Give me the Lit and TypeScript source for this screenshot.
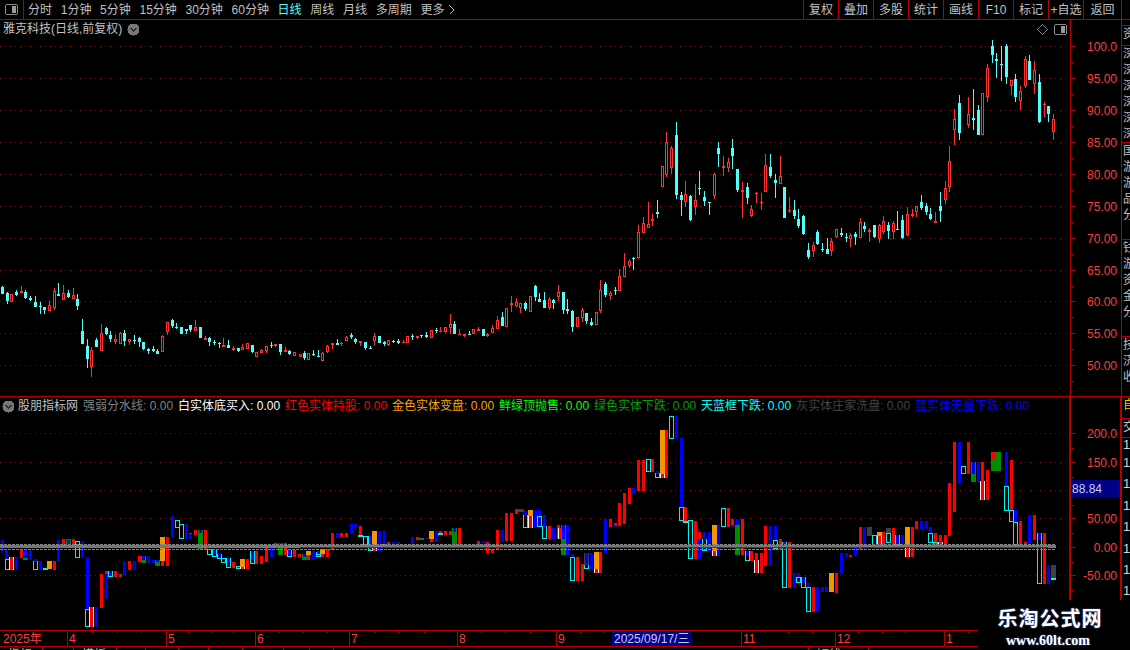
import { LitElement, html, css, svg } from "lit";
import { customElement } from "lit/decorators.js";

type Candle = [number, number, number, number, number, string];

function parseCandles(src: string, x0: number, y0: number): Candle[] {
  return src.trim().split(/\s*;\s*/).filter(Boolean).map((row) => {
    const p = row.trim().split(/\s+/);
    return [
      x0 + Number(p[0]) / 3,
      Math.round(y0 + Number(p[1]) / 3),
      Math.round(y0 + Number(p[2]) / 3),
      Math.round(y0 + Number(p[3]) / 3),
      Math.round(y0 + Number(p[4]) / 3),
      p[5],
    ] as Candle;
  });
}

const CANDLES: Candle[] = [
  ...parseCandles(`7 48 50 72 72 c;22 66 68 93 102 c;34 72 72 95 95 r;49 60 66 76 78 c;64 48 63 69 69 r;76 60 66 85 87 c;91 78 84 90 94 c;106 78 96 111 111 c;121 96 108 111 132 c;133 111 111 120 132 c;148 93 105 123 123 r;163 54 63 114 120 r;175 39 72 78 78 c;190 45 69 90 90 r;205 60 69 82 84 c;220 54 75 87 87 r;232 72 87 108 120 c;247 147 183 222 222 c;262 207 228 267 294 c;274 231 240 291 321 r;289 205 210 231 231 c;304 162 189 243 243 r;319 171 174 192 195 c;331 183 195 207 216 c;346 195 207 216 222 r;361 186 189 222 222 r;373 180 189 213 228 c;388 207 207 216 225 r;403 195 209 212 222 c;418 201 204 216 231 c;430 216 216 237 240 c;445 234 237 243 252 c;460 228 236 243 246 c;472 237 242 252 252 c;487 195 198 246 246 r;502 156 156 186 195 r;517 147 150 168 174 c;529 159 172 174 177 c;544 171 171 192 192 c;559 177 178 183 192 c;571 165 165 180 186 c;586 150 171 183 183 r;601 171 171 204 204 c;616 198 204 210 210 r;628 201 204 216 228 c;643 210 216 219 225 c;658 216 218 219 234 c;670 204 225 231 231 r;685 210 225 234 234 c;700 228 234 240 243 r;715 234 235 243 246 c;727 222 231 240 240 r;742 219 219 237 237 r;757 225 225 246 249 c;769 246 246 261 261 r;784 237 240 249 249 r;799 228 228 243 249 r;814 216 225 228 234 c;826 222 222 228 231 r;841 222 222 246 255 c;856 231 240 246 246 r;868 240 243 252 255 c;883 246 246 258 258 r`, 0, 270),
  ...parseCandles(`0 252 252 262 262 r;13 243 249 264 270 c;25 249 249 270 270 r;40 240 252 255 258 c;55 240 258 261 261 c;67 246 249 273 273 r;82 225 228 246 249 r;97 219 219 225 237 r;112 207 219 225 225 c;124 216 219 219 228 r;139 198 201 213 213 r;154 189 195 201 207 c;166 204 207 216 222 c;181 213 213 219 228 r;196 216 216 234 240 c;211 228 234 237 237 c;223 189 198 213 225 r;238 198 198 219 219 c;253 213 216 222 228 c;265 210 210 226 228 r;280 210 213 216 219 c;295 207 213 219 222 c;310 210 216 219 219 r;322 198 198 219 219 r;337 192 197 198 210 c;352 198 198 204 207 r;364 195 195 198 204 c;379 186 195 201 204 c;394 180 180 204 204 r;409 174 180 183 189 c;421 171 183 183 183 r;436 171 171 186 189 r;451 132 162 174 192 r;463 153 162 192 192 c;478 177 192 194 195 r;493 192 193 198 201 r;508 183 192 195 195 c;520 177 177 192 192 r;535 171 177 183 183 r;550 177 177 198 198 c;562 189 192 198 201 r;577 165 174 189 189 r;592 138 150 177 177 r;607 126 141 168 168 c;619 114 114 171 171 r;634 78 99 105 126 r;649 84 96 108 111 r;661 99 99 114 129 r;676 96 99 117 123 c;691 78 78 126 126 r;706 45 48 81 93 c;718 69 87 96 96 c`, 300, 270),
  ...parseCandles(`16 465 468 501 513 c;28 489 507 516 516 c;43 486 510 534 534 c;58 501 507 534 540 r;70 507 510 519 537 c;85 465 486 501 513 r;100 486 486 540 552 c;112 507 537 543 552 c;127 540 543 591 606 c;142 561 561 591 591 r;157 534 540 564 576 r;169 549 549 573 582 c;184 564 576 585 588 c;199 546 546 585 585 r;211 450 480 543 549 r;226 456 462 495 501 c;241 483 489 498 510 r;256 471 480 483 495 c;268 417 438 483 483 r;283 369 408 441 441 r;298 387 393 408 414 r;310 381 384 384 420 c`, 530, 130),
  ...parseCandles(`115 345 366 444 447 r;130 321 339 369 369 r;145 276 342 354 354 r;157 312 327 333 348 r;172 270 306 312 324 c;187 168 168 231 231 r;199 66 96 195 201 r;214 108 114 174 192 r;229 36 75 255 267 c;244 246 255 270 318 c;256 213 252 276 291 r;271 255 258 330 333 c;286 222 270 291 315 r;298 183 234 237 255 c;313 243 261 273 288 c;328 276 277 278 315 c;343 189 192 258 267 r;355 96 114 132 171 c;370 138 168 174 198 r;385 144 156 174 186 r;397 87 114 138 177 c;412 177 177 240 246 c;427 216 240 246 324 r;442 219 231 264 282 c;454 285 297 318 321 r;469 246 249 250 279 r;484 249 276 278 300 r;496 132 165 246 246 r;511 132 171 198 204 c;526 192 210 219 264 c;541 138 198 222 222 r;553 231 231 324 324 c;568 261 300 302 309 r;583 270 300 318 327 c;595 297 327 348 354 c;610 315 318 372 375 c;625 399 420 441 447 c;640 396 405 423 441 r;652 360 366 402 405 c;667 399 417 420 426 c;682 384 417 432 432 c;694 384 393 423 438 r;709 357 357 381 384 r;724 354 369 375 381 c;739 369 381 384 396 c;751 369 375 387 411 r;766 366 372 381 405 c;781 324 336 384 384 r;793 336 348 357 366 c;808 354 360 366 396 r;823 345 345 381 384 c;838 342 345 387 399 r;850 318 333 366 372 r;865 336 345 363 387 c;880 333 339 366 387 r;892 303 357 358 360 c`, 600, 110),
  ...parseCandles(`1116 255 270 324 327 c;1131 231 252 315 318 r;1146 237 252 258 261 r;1158 228 228 246 261 r;1173 195 216 234 240 c;1188 219 228 246 255 c;1200 234 252 267 270 c;1215 246 273 278 278 r;1230 186 228 243 276 c;1245 153 174 210 222 r;1258 48 93 171 186 r`, 530, 130),
  ...parseCandles(`523 327 357 390 435 r;538 285 309 399 420 c;565 291 342 375 384 r;580 267 354 360 390 c;595 315 330 405 405 c;607 280 280 405 405 r;622 192 205 291 307 r;637 120 138 165 190 c;649 159 177 183 235 c;664 138 192 195 243 c;679 132 138 231 252 c;694 240 240 258 285 r;706 222 237 291 306 c;721 258 273 303 330 r;736 168 177 258 264 r;748 165 183 240 240 c;763 183 210 252 282 r;778 222 246 366 369 c;793 306 312 312 351 r;805 318 318 342 366 c;820 342 357 396 420 r`, 780, 0),
];

type Bar = [number, number, number, string];

function parseBars(src: string, x0: number, y0: number): Bar[] {
  return src.trim().split(/\s*;\s*/).filter(Boolean).map((row) => {
    const p = row.trim().split(/\s+/);
    return [x0 + Number(p[0]) / 3, Math.round(y0 + Number(p[1]) / 3), Math.round(y0 + Number(p[2]) / 3), p[3]] as Bar;
  });
}

const BARS: Bar[] = [
  ...parseBars(`7 30 63 b;20 60 88 b;21 88 120 c;34 81 120 w;49 81 120 b;64 60 84 r;76 84 90 g;76 60 84 b;91 60 90 b;106 93 120 c;106 87 96 b;121 93 120 b;135 114 120 c;148 93 117 o;163 93 120 r;175 30 96 b;190 27 45 r;205 27 45 g;205 30 45 b;220 27 45 r;232 33 84 c;247 33 84 b;262 81 240 b;262 237 291 c;274 231 291 w;289 231 291 b;304 132 234 r;319 132 207 b;319 123 132 r;331 123 141 c;331 123 135 b;346 123 141 r;361 132 141 r;373 96 135 b;388 93 120 r;403 93 120 b;418 78 96 r;430 78 99 g;430 78 90 b;445 78 99 b;460 90 99 b;472 90 108 g;472 90 96 b;487 21 93 o;487 93 108 r;502 21 108 r;517 -42 24 b;532 -30 -6 c;544 -18 27 c;559 -18 27 b;571 9 27 b;571 9 12 r;586 0 15 r;601 0 57 g;601 0 10 b;616 0 57 r;628 57 75 c;643 57 81 c;643 57 72 b;658 72 87 c;658 72 84 b;670 84 99 c;685 84 114 c;685 84 99 b;700 96 114 r;715 108 117 c;727 87 111 o;727 111 117 w;742 87 117 r;757 63 102 c;757 63 90 b;770 63 102 r;784 78 102 r;799 54 96 r;814 48 81 b;826 39 51 r;841 39 75 g;841 39 54 b;856 39 75 r;868 60 81 c;868 60 75 b;883 60 81 r;898 72 81 r;913 72 90 g;913 72 81 b;925 63 75 o;925 75 90 r;940 63 90 b;955 66 81 c;955 66 75 b;967 57 72 o;967 72 81 r;982 57 81 r;997 9 60 r;1012 9 24 b;1024 9 21 r;1039 9 21 r`, 0, 530),
  ...parseBars(`55 843 852 b;55 852 861 c;68 837 852 o;68 852 861 r;82 837 861 r;97 789 840 r;112 789 804 b;125 789 801 r;139 789 801 r;154 762 792 b;166 762 771 b;181 768 798 r;181 795 801 c;196 798 831 c;211 798 843 c;211 798 828 b;223 783 828 o;223 828 843 w;238 783 843 b;253 783 831 b;250 822 831 c;265 816 831 r;280 816 834 b;295 816 828 b;310 825 831 r;322 825 831 r;337 801 828 b;352 801 810 r;365 804 810 g;380 804 807 b;394 783 807 o;394 807 816 r;409 783 816 b;421 783 789 r;421 789 795 c;436 783 795 r;451 783 795 r;463 774 828 g;463 774 786 b;478 774 828 r;493 825 831 c;508 828 834 b;520 828 834 r;535 813 831 r;550 813 819 b;562 816 849 r;577 837 849 r;592 780 840 r;607 780 816 b;619 729 813 r;634 729 813 r;649 717 732 r;661 717 726 k;676 735 774 c;676 723 738 b;691 720 738 o;691 738 774 w;706 720 774 b;718 720 771 b;718 738 771 c`, 300, 270),
  ...parseBars(`4 297 306 k;16 315 354 c;16 303 318 b;31 300 318 o;31 318 354 w;46 300 354 b;58 300 318 b;58 318 351 c;73 348 387 c;73 316 351 b;88 348 387 r;100 354 387 b;115 345 387 r;121 354 387 w;130 345 435 g;130 345 387 b;142 345 435 b;157 441 513 c;157 432 441 b;172 441 513 r;187 462 513 r;199 462 477 c;199 429 465 k;199 429 462 b;214 429 477 b;229 426 477 o;229 477 489 w;241 426 489 r;256 327 429 b;271 327 351 r;286 339 345 r;286 345 351 b;298 279 348 r;313 249 342 r;328 234 282 r;340 234 252 b;355 150 243 r;370 150 243 r;385 147 186 c;397 147 186 r;412 189 204 c;412 183 192 b;427 60 192 o;427 192 204 w;439 60 204 r;454 18 87 c;469 18 87 b;484 84 292 b;484 291 333 c;496 291 333 r;496 333 336 c;511 330 447 c;526 333 447 r;538 388 447 b;538 366 388 r;553 388 423 c;553 366 390 b;568 366 423 b;583 345 423 o;583 423 438 w;595 345 438 b;610 294 351 c;625 294 351 r;637 327 345 r;637 345 351 b;652 345 435 g;652 327 345 b;667 327 435 r;682 423 453 c;682 423 438 b;694 423 453 r;709 450 489 w;709 429 450 r;724 429 489 r;736 348 468 r;751 348 468 b;766 390 417 c;766 348 390 b;781 387 417 r`, 520, 410),
  ...parseBars(`13 216 354 c;13 216 234 b;28 216 354 r;43 309 354 b;55 309 322 b;55 322 340 c;70 322 354 c;70 322 340 b;85 340 352 b;85 352 426 c;100 352 426 r;112 352 426 b;127 352 366 b;139 352 366 b;154 309 366 o;169 309 369 r;184 250 312 b;199 250 262 b;211 255 262 r;226 228 258 b;241 171 237 r;253 171 237 b;268 171 198 k;283 195 228 c;298 186 198 o;298 198 228 w;310 186 228 r;325 189 219 c;325 174 189 k;340 174 222 r;352 195 225 c;352 195 222 b;367 195 225 b;382 171 225 o;382 225 261 w;397 171 261 r;409 153 177 r;424 153 177 b;439 153 177 b;451 171 189 b;451 189 219 c;466 189 231 r;466 216 231 c;481 216 231 w;481 195 216 r;496 195 231 r;508 39 198 r;523 -84 126 r;538 -84 42 b;550 -12 12 c;565 -84 12 r;580 -24 36 g;580 -24 12 b;595 -24 36 b;607 -24 33 r;607 33 90 w;622 0 90 r;640 -54 3 g;655 -54 3 g;640 -54 -30 r;679 -54 48 b;679 48 123 c;694 -30 120 r;694 120 156 c;706 120 156 b;706 156 225 c;721 153 225 r;736 216 225 r;748 135 219 b;763 135 210 r;778 189 342 c;778 189 210 b;793 189 342 r;805 285 342 b;820 285 324 k;820 324 330 c`, 780, 470),
];

const UP_TICKS = [
  { y: 46, t: "100.0" }, { y: 78, t: "95.00" }, { y: 110, t: "90.00" }, { y: 142, t: "85.00" },
  { y: 174, t: "80.00" }, { y: 206, t: "75.00" }, { y: 238, t: "70.00" }, { y: 270, t: "65.00" },
  { y: 301, t: "60.00" }, { y: 333, t: "55.00" }, { y: 365, t: "50.00" },
];
const LOW_TICKS = [
  { y: 433, t: "200.0" }, { y: 462, t: "150.0" }, { y: 490, t: "100.0" },
  { y: 518, t: "50.00" }, { y: 547, t: "0.00" }, { y: 575, t: "-50.00" },
];

const COLORS: Record<string, string> = {
  b: "#0000ff", r: "#ff0000", g: "#008c00", o: "#f09800", k: "#404040",
};
const CYAN = "#54fcfc";
const FRAME = "#00f0f0";
const RED = "#ff3232";

const TABS = ["分时", "1分钟", "5分钟", "15分钟", "30分钟", "60分钟", "日线", "周线", "月线", "多周期"];
const BTNS = ["复权", "叠加", "多股", "统计", "画线", "F10", "标记", "+自选", "返回"];
const LEGEND = [
  ["强弱分水线", "l-gray"], ["白实体底买入", "l-white"], ["红色实体持股", "l-red"], ["金色实体变盘", "l-gold"],
  ["鲜绿顶抛售", "l-lime"], ["绿色实体下跌", "l-green"], ["天蓝框下跌", "l-cyan"], ["灰实体庄家洗盘", "l-dim"],
  ["蓝实体无量下跌", "l-blue"],
];
const MONTHS = [
  { x: 67, t: "4" }, { x: 166, t: "5" }, { x: 255, t: "6" }, { x: 349, t: "7" }, { x: 457, t: "8" },
  { x: 556, t: "9" }, { x: 741, t: "11" }, { x: 835, t: "12" }, { x: 944, t: "1" },
];
const WEEKS = [92, 117, 141, 188, 211, 233, 279, 303, 327, 375, 398, 424, 481, 505, 530, 580, 603, 765, 788, 812, 858, 882, 905, 968];

const layoutIcon = html`<svg class="panel-icon" width="13" height="11" viewBox="0 0 13 11">
  <rect x="0.5" y="0.5" width="12" height="10" rx="2" fill="none" stroke="#8a8a8a"></rect>
  <rect x="7" y="2" width="4" height="7" fill="#9a9a9a"></rect>
</svg>`;
const roundArrow = html`<svg class="round" width="13" height="13" viewBox="0 0 13 13">
  <circle cx="6.5" cy="6.5" r="6" fill="#777"></circle>
  <path d="M3.5 5.2 L6.5 8.2 L9.5 5.2" fill="none" stroke="#2a2a2a" stroke-width="1.5"></path>
</svg>`;

@customElement("app-root")
export class AppRoot extends LitElement {
  static styles = css`
    :host {
      display: block; position: relative; width: 1130px; height: 650px; overflow: hidden;
      background: #000; color: #c0c0c0;
      font: 12px/16px "Liberation Sans", "Noto Sans CJK SC", sans-serif;
    }
    svg { display: block; shape-rendering: crispEdges; }
    .top { display: flex; height: 19px; border-bottom: 1px solid #b40000; }
    .logo { width: 23px; border-right: 1px solid #b40000; display: flex; align-items: center; justify-content: center; }
    .tabs { display: flex; gap: 8.7px; padding-left: 4px; align-items: center; flex: 1; line-height: 20px; padding-top: 1px; }
    .tabs .on { color: #54fcfc; }
    .more { display: flex; align-items: center; gap: 5px; }
    .btns { display: flex; padding-right: 8px; padding-top: 1px; }
    .btn { width: 34px; border-left: 1px solid #b40000; text-align: center; line-height: 18px; margin-top: -1px; padding-top: 1px; }
    .btn.last { border-right: 1px solid #b40000; width: 37px; }
    .panel { display: grid; grid-template-columns: 1070px 51px 9px; }
    .upper { height: 376px; border-bottom: 1px solid #b40000; }
    .lower { height: 233px; }
    .area { position: relative; }
    .title { position: absolute; left: 3px; top: 1px; display: flex; align-items: center; gap: 5px; line-height: 16px; }
    .marks { position: absolute; right: 3px; top: 4px; display: flex; align-items: center; gap: 6px; }
    .legend { position: absolute; left: 2px; top: 1px; display: flex; gap: 5px; align-items: center; white-space: nowrap; line-height: 16px; }
    .legend .name { margin-left: -2px; }
    .val { display: inline-block; width: 30px; }
    .item { display: flex; }
    .l-gray { color: #808080; } .l-white { color: #fff; } .l-red { color: #ff0000; } .l-gold { color: #ffa000; }
    .l-lime { color: #00ff00; } .l-green { color: #00a000; } .l-cyan { color: #00ffff; } .l-dim { color: #444; } .l-blue { color: #0000ff; }
    .axis { border-left: 1px solid #b40000; }
    .lower .axis { border-left-width: 2px; margin-left: -1px; }
    .strip { border-left: 1px solid #b40000; display: flex; flex-direction: column; overflow: hidden; }
    .lower .strip { border-left-width: 2px; margin-left: -1px; }
    .cell { overflow: hidden; border-bottom: 1px solid #b40000; box-sizing: border-box; flex: none; }
    .cell:last-child { border-bottom: none; flex: 1; }
    .stack { width: 12px; margin-left: 1px; line-height: 16px; word-break: break-all; }
    .h5 { height: 6px; } .h20 { height: 20px; } .h97 { height: 97px; }
    .h22 { height: 22px; } .h19 { height: 19px; }
    .yellow { color: #d8d800; }
    .ones { color: #d8d8d8; }
    .one { height: 21.4px; line-height: 21.4px; margin-left: 1px; font-size: 13px; }
    .one.first { height: 14px; line-height: 14px; }
    .dates { border-top: 1px solid #b40000; border-bottom: 1px solid #b40000; height: 15px; width: 978px; }
    .foot { display: flex; height: 3px; overflow: hidden; color: #c0c0c0; }
    .foot span { border-right: 1px solid #b40000; box-sizing: border-box; line-height: 16px; height: 12px; padding-left: 8px; white-space: nowrap; overflow: hidden; flex: none; }
    .w42 { width: 43px; } .w31 { width: 31px; } .w29 { width: 29px; } .w33 { width: 33px; } .w30 { width: 30px; } .w34 { width: 34px; } .w41 { width: 41px; } .w26 { width: 26px; } .w24 { width: 24px; } .w475 { width: 475px; } .w60 { width: 60px; }
    .mark {
      position: absolute; right: 0; bottom: 0; width: 152px; height: 50px; background: #000; color: #fff;
      display: flex; flex-direction: column; align-items: center; text-shadow: 0 0 2px #4060c0;
    }
    .mark .cn { font: 700 20px/22px "Noto Sans CJK SC", sans-serif; letter-spacing: 1px; margin-top: 7px; margin-left: -8px; }
    .mark .url { font: 700 14px/14px "Liberation Serif", serif; margin-top: 5px; margin-left: -12px; }
    text { shape-rendering: auto; }
  `;

  private renderCandles() {
    return CANDLES.map(([xc, hi, top, bot, lo, kind]) => {
      const wx = Math.floor(xc);
      const bx = wx - 1;
      const c = kind === "c" ? CYAN : RED;
      const h = Math.max(1, bot - top);
      const wick = svg`<rect x=${wx} y=${hi} width="1" height=${Math.max(1, lo - hi)} fill=${c}></rect>`;
      if (kind === "c" || h < 2) {
        return svg`${wick}<rect x=${bx} y=${top} width="3" height=${h} fill=${c}></rect>`;
      }
      return svg`${wick}<rect x=${bx + 0.5} y=${top + 0.5} width="2" height=${h - 1} fill="#000" stroke=${c}></rect>`;
    });
  }

  private renderBars() {
    return BARS.map(([xc, top, bot, t]) => {
      const h = Math.max(1, bot - top);
      const x = Math.floor(xc);
      if (t === "c") {
        return svg`<rect x=${x - 2 + 0.5} y=${top + 0.5} width="4" height=${Math.max(1, h - 1)} fill="none" stroke=${FRAME}></rect>`;
      }
      if (t === "w") {
        return svg`<rect x=${x - 2} y=${top} width="5" height=${h} fill="#f0f0f0"></rect><rect x=${x - 1} y=${top} width="3" height=${h} fill="#ff0000"></rect>`;
      }
      const wide = t === "o" || t === "g" || t === "k";
      return svg`<rect x=${wide ? x - 2 : x - 1} y=${top} width=${wide ? 5 : 3} height=${h} fill=${COLORS[t]}></rect>`;
    });
  }

  private grid(ticks: { y: number }[]) {
    return ticks.map((t) => svg`<line x1="0" x2="1068" y1=${t.y + 0.5} y2=${t.y + 0.5} stroke="#900000" stroke-dasharray="1 4"></line>`);
  }

  private axisTicks(ticks: { y: number; t: string }[], hide?: string) {
    const step = ticks.length > 1 ? (ticks[1].y - ticks[0].y) / 2 : 0;
    return ticks.map((t) => svg`
      <rect x="0" y=${t.y} width="5" height="1" fill="#b40000"></rect>
      <rect x="0" y=${Math.round(t.y + step)} width="3" height="1" fill="#b40000"></rect>
      ${t.t === hide ? "" : svg`<text x="46" y=${t.y + 5} text-anchor="end" fill="#ff3c3c" font-size="12">${t.t}</text>`}
    `);
  }

  render() {
    return html`
      <div class="top">
        <div class="logo">${layoutIcon}</div>
        <div class="tabs">
          ${TABS.map((t) => html`<span class=${t === "日线" ? "on" : ""}>${t}</span>`)}
          <span class="more">更多
            <svg width="6" height="10" viewBox="0 0 6 10"><path d="M0.5 0.5 L5 5 L0.5 9.5" fill="none" stroke="#c0c0c0"></path></svg>
          </span>
        </div>
        <div class="btns">
          ${BTNS.map((b, i) => html`<div class="btn ${i === BTNS.length - 1 ? "last" : ""}">${b}</div>`)}
        </div>
      </div>

      <div class="panel upper">
        <div class="area">
          <svg width="1070" height="376" viewBox="0 20 1070 376">
            ${this.grid(UP_TICKS)}
            ${this.renderCandles()}
          </svg>
          <div class="title"><span>雅克科技(日线,前复权)</span>${roundArrow}</div>
          <div class="marks">
            <svg width="11" height="11" viewBox="0 0 11 11"><path d="M5.5 0.5 L10.5 5.5 L5.5 10.5 L0.5 5.5 Z" fill="none" stroke="#808080"></path></svg>
            ${layoutIcon}
          </div>
        </div>
        <div class="axis">
          <svg width="50" height="376" viewBox="0 20 50 376">${this.axisTicks(UP_TICKS)}</svg>
        </div>
        <div class="strip">
          <div class="cell h5"></div>
          <div class="cell h20"><div class="stack">资</div></div>
          <div class="cell h97"><div class="stack">深深深深深深</div></div>
          <div class="cell h97"><div class="stack">国游游品分</div></div>
          <div class="cell h97"><div class="stack">钱游资金分</div></div>
          <div class="cell"><div class="stack">技济收</div></div>
        </div>
      </div>

      <div class="panel lower">
        <div class="area">
          <svg width="1070" height="233" viewBox="0 397 1070 233">
            ${this.grid(LOW_TICKS)}
            ${this.renderBars()}
            <line x1="0" x2="1056" y1="544.5" y2="544.5" stroke="#808080" stroke-dasharray="3 1"></line>
            <rect x="0" y="545" width="1056" height="3" fill="#787878"></rect>
            <rect x="300" y="547" width="748" height="1" fill="#2a2ae0"></rect>
            <line x1="0" x2="1056" y1="549" y2="549" stroke="#808080" stroke-dasharray="3 1"></line>
          </svg>
          <div class="legend">
            ${roundArrow}
            <span class="name">股朋指标网</span>
            ${LEGEND.map(([n, c]) => html`<span class="item ${c}">${n}<span class="val">: 0.00</span></span>`)}
          </div>
        </div>
        <div class="axis">
          <svg width="51" height="233" viewBox="0 397 51 233">
            ${this.axisTicks(LOW_TICKS, "100.0")}
            <rect x="0" y="480" width="50" height="17" fill="#000088"></rect>
            <text x="1" y="493" fill="#c8c8ff" font-size="12">88.84</text>
          </svg>
        </div>
        <div class="strip">
          <div class="cell h22"><div class="stack yellow">自</div></div>
          <div class="cell h19"><div class="stack">交</div></div>
          <div class="cell ones">
            <div class="one first">1</div>
            ${[1, 2, 3, 4, 5, 6, 7, 8].map(() => html`<div class="one">1</div>`)}
          </div>
        </div>
      </div>

      <div class="dates">
        <svg width="978" height="15" viewBox="0 0 978 15">
          <text x="3" y="12" fill="#ff3c3c" font-size="12" font-family="Liberation Sans, Noto Sans CJK SC">2025年</text>
          ${WEEKS.map((x) => svg`<rect x=${x} y="0" width="1" height="2" fill="#b40000"></rect>`)}
          ${MONTHS.map((m) => svg`
            <rect x=${m.x} y="0" width="1" height="15" fill="#b40000"></rect>
            <text x=${m.x + 2} y="12" fill="#ff3c3c" font-size="12">${m.t}</text>`)}
          <rect x="612" y="0" width="80" height="15" fill="#000088"></rect>
          <text x="614" y="12" fill="#c8c8ff" font-size="12" font-family="Liberation Sans, Noto Sans CJK SC">2025/09/17/三</text>
        </svg>
      </div>
      <div class="foot">
        <span class="w42">指标</span><span class="w31"></span><span class="w42">模板</span><span class="w29"></span><span class="w33"></span>
        <span class="w30"></span><span class="w34"></span><span class="w41"></span><span class="w26"></span><span class="w24"></span>
        <span class="w475"></span><span class="w60">短线</span>
      </div>

      <div class="mark">
        <div class="cn">乐淘公式网</div>
        <div class="url">www.60lt.com</div>
      </div>
    `;
  }
}
